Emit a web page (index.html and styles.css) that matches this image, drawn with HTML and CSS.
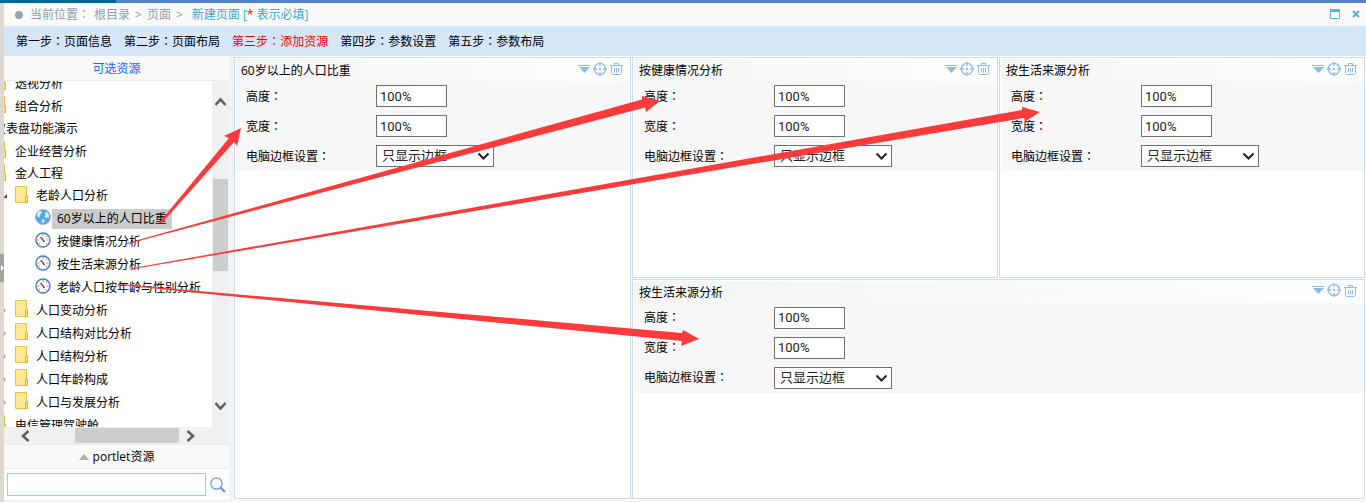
FILE: index.html
```html
<!DOCTYPE html>
<html lang="zh-CN">
<head>
<meta charset="utf-8">
<title>新建页面</title>
<link rel="stylesheet" href="styles.css">
</head>
<body>
<svg class="sprite" aria-hidden="true">
  <symbol id="i-folder" viewBox="0 0 13 17"><path d="M.5.5h11v9h1v7H.5z" fill="#ffe793" stroke="#e6c14c"/><path d="M10.500 16.500v-6.500h2v6.500z" fill="#ffdf78" stroke="#dfb53e"/></symbol>
  <symbol id="i-globe" viewBox="0 0 16 16"><circle cx="8" cy="8" r="7.500" fill="#4fa8e2" stroke="#9fb6c8"/><path d="M3 2.500l3-.5 1 1.500-2 2 .5 1.500-1.500 1.500-1.500-1L2 6zM10 3.500l2-.5 2 3v3l-1.500-1-1 1.500-2-2 1-2zM6.500 11l2-1 1.500 2-1.500 2-1.500-.5z" fill="#d9effb"/></symbol>
  <symbol id="i-gauge" viewBox="0 0 16 16"><circle cx="8" cy="8" r="7" fill="#fff" stroke="#4a7ab5" stroke-width="1.400"/><path d="M8 2v2M2.500 8h2M11.500 8h2M4 12l1-1M12 12l-1-1M12 4l-1 1" stroke="#6f9ad2"/><path d="M5.500 5l2.500 3" stroke="#e03030" stroke-width="1.600"/><path d="M8 8l1.500 2" stroke="#444" stroke-width="1.400"/></symbol>
  <symbol id="i-chev" viewBox="0 0 13 10"><path d="M1.500 2l5 5.500 5-5.500" fill="none" stroke="currentColor" stroke-width="2.600"/></symbol>
  <symbol id="i-pick" viewBox="0 0 13 10"><path d="M1.500 2.500l5 5 5-5" fill="none" stroke="currentColor" stroke-width="2"/></symbol>
  <symbol id="i-menu" viewBox="0 0 12 8"><path d="M0 0h12v1H0zM1 2h11L6.500 8z" fill="#8fb9ea"/></symbol>
  <symbol id="i-aim" viewBox="0 0 14 14"><circle cx="7" cy="7" r="5.700" fill="none" stroke="#8fb9ea" stroke-width="1.300"/><path d="M7 0v4M7 10v4M0 7h4M10 7h4" stroke="#8fb9ea" stroke-width="1.300"/><path d="M6 6h2v2H6z" fill="#8fb9ea"/></symbol>
  <symbol id="i-trash" viewBox="0 0 13 13"><path d="M0 3.500h13M4.500 3V1.500h4V3M1.500 3.500v8l1 1h8l1-1v-8M4.500 6v4.500M6.500 6v4.500M8.500 6v4.500" fill="none" stroke="#8fb9ea"/></symbol>
</svg>

<div class="topbar"><div class="topbar-active"></div></div>
<div class="shell">
  <div class="rail"><button class="rail-handle" aria-label="收起"><svg viewBox="0 0 4 6"><path d="M1 0l3 3-3 3z" fill="#fff"/></svg></button></div>
  <div class="page">
    <header class="crumbs">
      <span class="dot"></span>
      <span class="crumb-label">当前位置<span class="colon" lang="zh-TW">：</span></span>
      <a class="crumb-root" href="#">根目录</a><span class="sep">&gt;</span><a href="#">页面</a><span class="sep">&gt;</span>
      <span class="crumb-current">新建页面 [<span class="star">*</span> 表示必填]</span>
      <span class="window-tools">
        <button aria-label="最大化"><svg width="10" height="10" viewBox="0 0 10 10"><path d="M.5.5h9v9h-9z" fill="none" stroke="#5fb3d6"/><path d="M0 0h10v3H0z" fill="#5fb3d6"/></svg></button>
        <button aria-label="关闭"><svg width="8" height="8" viewBox="0 0 8 8"><path d="M1 1l6 6M7 1L1 7" stroke="#5fb3d6" stroke-width="2.200"/></svg></button>
      </span>
    </header>
    <nav class="steps">
      <a href="#">第一步<span class="colon" lang="zh-TW">：</span>页面信息</a>
      <a href="#">第二步<span class="colon" lang="zh-TW">：</span>页面布局</a>
      <a class="current" href="#">第三步<span class="colon" lang="zh-TW">：</span>添加资源</a>
      <a href="#">第四步<span class="colon" lang="zh-TW">：</span>参数设置</a>
      <a href="#">第五步<span class="colon" lang="zh-TW">：</span>参数布局</a>
    </nav>
    <div class="work">
      <aside class="sidebar">
        <h2 class="side-title">可选资源</h2>
        <div class="tree-box">
          <div class="tree-view">
            <ul class="tree">
              <li><ul>
                <li><div class="node"><svg class="icon folder"><use href="#i-folder"/></svg><span>透视分析</span></div></li>
                <li><div class="node"><svg class="icon folder"><use href="#i-folder"/></svg><span>组合分析</span></div></li>
              </ul></li>
              <li><div class="node open"><svg class="icon folder"><use href="#i-folder"/></svg><span>仪表盘功能演示</span></div>
                <ul>
                  <li><div class="node"><svg class="icon folder"><use href="#i-folder"/></svg><span>企业经营分析</span></div></li>
                  <li><div class="node open"><svg class="icon folder"><use href="#i-folder"/></svg><span>金人工程</span></div>
                    <ul>
                      <li><div class="node open"><svg class="twist" viewBox="0 0 7 7"><path d="M7 1v4H3z" fill="#444"/></svg><svg class="icon folder"><use href="#i-folder"/></svg><span>老龄人口分析</span></div>
                        <ul>
                          <li><div class="node selected"><svg class="icon"><use href="#i-globe"/></svg><span>60岁以上的人口比重</span></div></li>
                          <li><div class="node"><svg class="icon"><use href="#i-gauge"/></svg><span>按健康情况分析</span></div></li>
                          <li><div class="node"><svg class="icon"><use href="#i-gauge"/></svg><span>按生活来源分析</span></div></li>
                          <li><div class="node"><svg class="icon"><use href="#i-gauge"/></svg><span>老龄人口按年龄与性别分析</span></div></li>
                        </ul>
                      </li>
                      <li><div class="node"><svg class="twist" viewBox="0 0 7 7"><path d="M4 1l2 2.500L4 6z" fill="#aaa"/></svg><svg class="icon folder"><use href="#i-folder"/></svg><span>人口变动分析</span></div></li>
                      <li><div class="node"><svg class="twist" viewBox="0 0 7 7"><path d="M4 1l2 2.500L4 6z" fill="#aaa"/></svg><svg class="icon folder"><use href="#i-folder"/></svg><span>人口结构对比分析</span></div></li>
                      <li><div class="node"><svg class="twist" viewBox="0 0 7 7"><path d="M4 1l2 2.500L4 6z" fill="#aaa"/></svg><svg class="icon folder"><use href="#i-folder"/></svg><span>人口结构分析</span></div></li>
                      <li><div class="node"><svg class="twist" viewBox="0 0 7 7"><path d="M4 1l2 2.500L4 6z" fill="#aaa"/></svg><svg class="icon folder"><use href="#i-folder"/></svg><span>人口年龄构成</span></div></li>
                      <li><div class="node"><svg class="twist" viewBox="0 0 7 7"><path d="M4 1l2 2.500L4 6z" fill="#aaa"/></svg><svg class="icon folder"><use href="#i-folder"/></svg><span>人口与发展分析</span></div></li>
                    </ul>
                  </li>
                  <li><div class="node"><svg class="icon folder"><use href="#i-folder"/></svg><span>电信管理驾驶舱</span></div></li>
                </ul>
              </li>
            </ul>
          </div>
          <div class="vbar">
            <svg class="chev up"><use href="#i-chev"/></svg>
            <div class="vtrack"><div class="vthumb"></div></div>
            <svg class="chev"><use href="#i-chev"/></svg>
          </div>
        </div>
        <div class="hbar">
          <svg class="chev left"><use href="#i-chev"/></svg>
          <div class="hthumb"></div>
          <svg class="chev right"><use href="#i-chev"/></svg>
        </div>
        <button class="portlet"><svg width="10" height="6" viewBox="0 0 10 6"><path d="M5 0l5 6H0z" fill="#b0b0b0"/></svg>portlet资源</button>
        <div class="search">
          <input type="text" aria-label="搜索资源">
          <button aria-label="搜索"><svg width="16" height="16" viewBox="0 0 16 16"><circle cx="6.500" cy="6.500" r="5.700" fill="#f4f9ff" stroke="#6f9bd8" stroke-width="1.200"/><path d="M10.500 10.500l4.500 4.500" stroke="#5d8fd6" stroke-width="2"/></svg></button>
        </div>
      </aside>

      <main class="board">
        <section class="panel tall">
          <header><h3>60岁以上的人口比重</h3><button aria-label="菜单"><svg width="12" height="8"><use href="#i-menu"/></svg></button><button aria-label="定位"><svg width="14" height="14"><use href="#i-aim"/></svg></button><button aria-label="删除"><svg width="13" height="13"><use href="#i-trash"/></svg></button></header>
          <form>
            <label for="h1">高度<span class="colon" lang="zh-TW">：</span></label><input id="h1" type="text" value="100%">
            <label for="w1">宽度<span class="colon" lang="zh-TW">：</span></label><input id="w1" type="text" value="100%">
            <label for="b1">电脑边框设置<span class="colon" lang="zh-TW">：</span></label><div class="pick"><select id="b1"><option>只显示边框</option></select><svg class="chev"><use href="#i-pick"/></svg></div>
          </form>
        </section>
        <section class="panel">
          <header><h3>按健康情况分析</h3><button aria-label="菜单"><svg width="12" height="8"><use href="#i-menu"/></svg></button><button aria-label="定位"><svg width="14" height="14"><use href="#i-aim"/></svg></button><button aria-label="删除"><svg width="13" height="13"><use href="#i-trash"/></svg></button></header>
          <form>
            <label for="h2">高度<span class="colon" lang="zh-TW">：</span></label><input id="h2" type="text" value="100%">
            <label for="w2">宽度<span class="colon" lang="zh-TW">：</span></label><input id="w2" type="text" value="100%">
            <label for="b2">电脑边框设置<span class="colon" lang="zh-TW">：</span></label><div class="pick"><select id="b2"><option>只显示边框</option></select><svg class="chev"><use href="#i-pick"/></svg></div>
          </form>
        </section>
        <section class="panel">
          <header><h3>按生活来源分析</h3><button aria-label="菜单"><svg width="12" height="8"><use href="#i-menu"/></svg></button><button aria-label="定位"><svg width="14" height="14"><use href="#i-aim"/></svg></button><button aria-label="删除"><svg width="13" height="13"><use href="#i-trash"/></svg></button></header>
          <form>
            <label for="h3">高度<span class="colon" lang="zh-TW">：</span></label><input id="h3" type="text" value="100%">
            <label for="w3">宽度<span class="colon" lang="zh-TW">：</span></label><input id="w3" type="text" value="100%">
            <label for="b3">电脑边框设置<span class="colon" lang="zh-TW">：</span></label><div class="pick"><select id="b3"><option>只显示边框</option></select><svg class="chev"><use href="#i-pick"/></svg></div>
          </form>
        </section>
        <section class="panel wide">
          <header><h3>按生活来源分析</h3><button aria-label="菜单"><svg width="12" height="8"><use href="#i-menu"/></svg></button><button aria-label="定位"><svg width="14" height="14"><use href="#i-aim"/></svg></button><button aria-label="删除"><svg width="13" height="13"><use href="#i-trash"/></svg></button></header>
          <form>
            <label for="h4">高度<span class="colon" lang="zh-TW">：</span></label><input id="h4" type="text" value="100%">
            <label for="w4">宽度<span class="colon" lang="zh-TW">：</span></label><input id="w4" type="text" value="100%">
            <label for="b4">电脑边框设置<span class="colon" lang="zh-TW">：</span></label><div class="pick"><select id="b4"><option>只显示边框</option></select><svg class="chev"><use href="#i-pick"/></svg></div>
          </form>
        </section>
      </main>
    </div>
  </div>
</div>

<svg class="arrows" viewBox="0 0 1366 502" preserveAspectRatio="none" aria-hidden="true">
  <g fill="#fb3b3b">
    <path d="M159 223L229 138L224 136L241 128L237 146L234 142L162 223Z"/>
    <path d="M127 243L642 99.500L642 96L660 101L646 112L645 107.500L127 244Z"/>
    <path d="M130 268.500L1022 110L1022 107L1040 112L1025 121.500L1024 118L130 269.500Z"/>
    <path d="M119 284L682 333L683 330L699 339L681 346L682 341L119 285Z"/>
  </g>
</svg>
</body>
</html>
```
FILE: styles.css
```css
* { box-sizing: border-box; }
body {
  margin: 0;
  height: 100vh;
  display: flex;
  flex-direction: column;
  overflow: hidden;
  background: #f3f3f3;
  color: #000;
  font: 12px/16px "Open Sans", "Noto Sans CJK SC", sans-serif;
}
h2, h3, ul { margin: 0; padding: 0; font-size: 12px; font-weight: 400; list-style: none; }
button { padding: 0; border: 0; background: none; font: inherit; color: inherit; display: flex; align-items: center; justify-content: center; }
a { color: inherit; text-decoration: none; }
svg { display: block; flex: none; }
.sprite { display: none; }
.colon { font-family: "Noto Sans CJK TC", sans-serif; line-height: 1; }

.topbar { flex: none; height: 3px; background: #4c84c4; }
.topbar-active { width: 116px; height: 3px; background: #006699; }
.shell { flex: 1; min-height: 0; display: flex; }
.rail { width: 4px; display: flex; align-items: center; background: #dcd8d3; }
.rail-handle { width: 4px; height: 28px; margin-top: 30px; background: #a5a3a1; }
.rail-handle svg { width: 4px; height: 6px; }
.page { flex: 1; min-width: 0; display: flex; flex-direction: column; }

.crumbs { flex: none; height: 23px; padding: 0 6px 0 11px; display: flex; align-items: center; background: #fafaf8; color: #8ba0ad; }
.dot { width: 8px; height: 8px; border-radius: 50%; background: #8ea5b5; }
.crumb-label { margin: 0 4px 0 7px; }
.sep { margin: 0 5px; }
.crumb-current { margin-left: 4px; color: #36a9dd; }
.star { color: #f00; }
.window-tools { margin: 0 0 2px auto; display: flex; gap: 12px; }

.steps { flex: none; height: 30px; padding: 2px 0 0 12px; display: flex; align-items: center; gap: 12px; background: #d5e6f7; }
.steps .current { color: #f00; }

.work { flex: 1; min-height: 0; display: flex; gap: 5px; background: #f5f3f2; padding-bottom: 2px; }
.sidebar { flex: none; width: 225px; display: flex; flex-direction: column; background: #fff; }
.side-title { flex: none; height: 25px; line-height: 26px; text-align: center; color: #0a6cff; background: #f9f9f8; border-bottom: 1px solid #ece9e6; }
.tree-box { flex: 1; min-height: 0; display: flex; }
.tree-view { flex: 1; min-width: 0; overflow: hidden; }
.tree { margin: -9px 0 0 -47px; white-space: nowrap; }
.tree ul { padding-left: 21px; }
.node { height: 23px; display: flex; align-items: center; padding-left: 15px; }
.open { height: 22px; }
.twist { width: 7px; height: 7px; margin: 0 0 0 -14px; }
.twist + .icon { margin-left: 8px; margin-right: 3px; }
.icon { width: 16px; height: 16px; margin: 0 1px 4px 0; }
.folder { width: 13px; height: 17px; margin-right: 4px; }
.node span { padding: 2px 5px; }
.selected span { background: #cbcbcb; }

.chev { width: 13px; height: 10px; color: #606060; }
.up { transform: rotate(180deg); }
.left { transform: rotate(90deg); }
.right { transform: rotate(-90deg); }
.vbar { flex: none; width: 17px; padding: 16px 0; display: flex; flex-direction: column; align-items: center; background: #f0f0f0; }
.vtrack { flex: 1; width: 15px; padding-top: 72px; }
.vthumb { height: 92px; background: #cdcdcd; }
.hbar { flex: none; height: 17px; padding: 0 32px 0 15px; display: flex; align-items: center; background: #f0f0f0; }
.hthumb { flex: 1; height: 15px; margin: 0 5px 0 43px; background: #cdcdcd; }
.portlet { flex: none; height: 25px; gap: 4px; background: #f9f9f8; border: solid #ece9e6; border-width: 1px 0; }
.search { flex: none; height: 31px; padding: 4px 3px; display: flex; align-items: center; gap: 4px; }
.search input { flex: 1; min-width: 0; height: 23px; border: 1px solid #a9c4e6; background: #fff; }

.board { flex: 1; min-width: 0; padding: 1px 1px 1px 0; display: grid; grid-template-columns: 397fr 366fr 366fr; grid-template-rows: 1fr 1fr; gap: 1px; background: #fff; }
.panel { border: 1px solid #cbdce9; padding: 1px; background: #fff; min-width: 0; }
.tall { grid-row: 1 / 3; }
.wide { grid-column: 2 / 4; }
.panel header { height: 22px; padding: 0 6px 0 5px; display: flex; align-items: center; gap: 3px; background: linear-gradient(to right, #f4f4f4, #fff); }
.panel h3 { margin-right: auto; padding-top: 2px; }
.panel header button { padding-bottom: 3px; }
.panel form { display: grid; grid-template-columns: 130px 1fr; grid-auto-rows: 30px; align-items: center; padding-left: 10px; background: #f7f7f7; }
.panel label { padding-top: 1px; }
.panel input, .panel select { height: 22px; margin: 0; border: 1px solid #707070; border-radius: 0; background: #fff; color: #222; font: 13px/20px Roboto, "Noto Sans CJK SC", sans-serif; }
.panel input { width: 71px; padding: 0 3px; }
.pick { display: flex; align-items: center; }
.pick select { appearance: none; width: 118px; padding: 0 5px; }
.pick .chev { margin-left: -17px; color: #222; pointer-events: none; }

.arrows { position: absolute; inset: 0; width: 100%; height: 100%; pointer-events: none; }
```
